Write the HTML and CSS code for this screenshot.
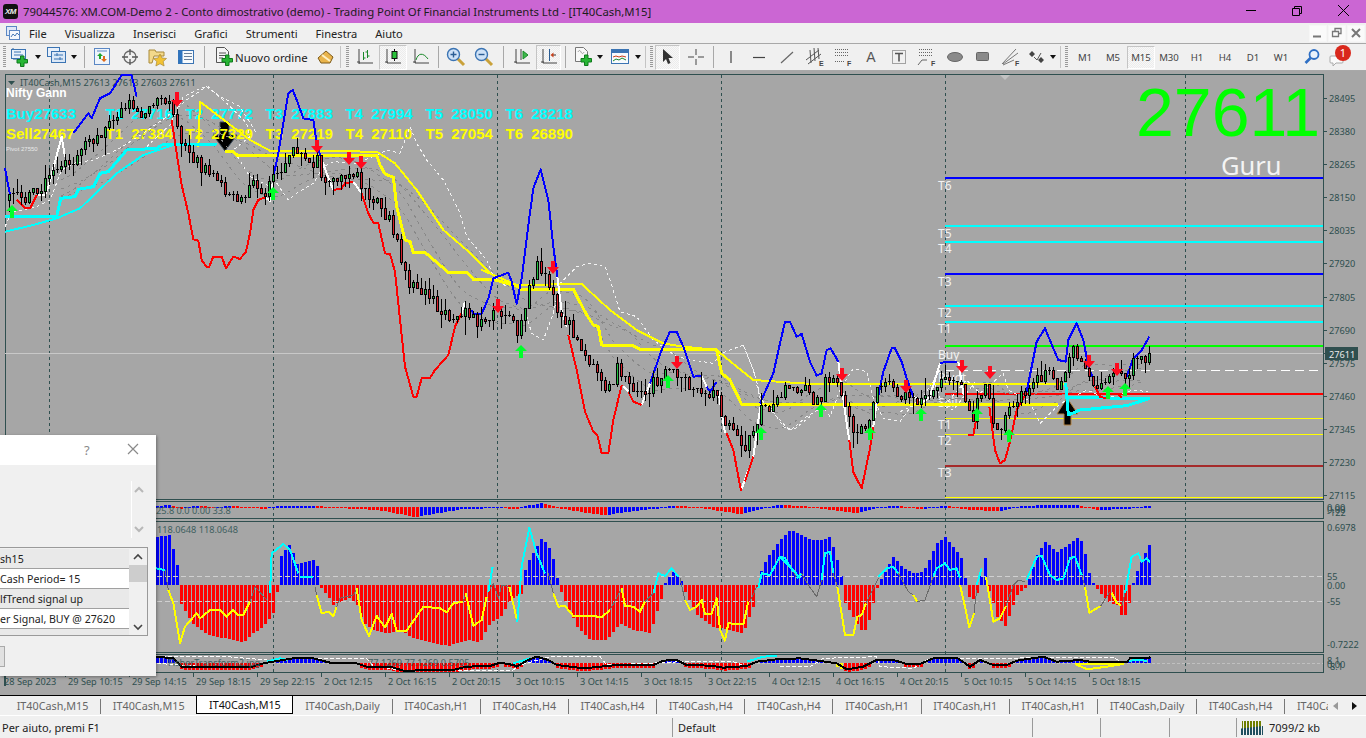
FILE: index.html
```html
<!DOCTYPE html>
<html lang="it">
<head>
<meta charset="utf-8">
<title>XM MetaTrader</title>
<link rel="stylesheet" href="styles.css">
</head>
<body>
<div class="app">
  <header class="titlebar">
    <span class="logo"><span class="logo-t">XM</span></span>
    <span class="title">79044576: XM.COM-Demo 2 - Conto dimostrativo (demo) - Trading Point Of Financial Instruments Ltd - [IT40Cash,M15]</span>
    <span class="winctl">
      <svg class="wc" width="46" height="23" viewBox="0 0 46 23"><path d="M18 10.5h10" stroke="#000" fill="none"/></svg>
      <svg class="wc" width="46" height="23" viewBox="0 0 46 23"><path d="M18.5 8.5h7v7h-7zM20.5 8.500v-2h7v7h-2" stroke="#000" fill="none"/></svg>
      <svg class="wc" width="46" height="23" viewBox="0 0 46 23"><path d="M18 5l11 11M29 5l-11 11" stroke="#000" fill="none"/></svg>
    </span>
  </header>

  <nav class="menubar">
    <svg class="mdi" width="16" height="16" viewBox="0 0 16 16"><rect x="1.5" y="1.5" width="10" height="9" fill="#dfe9f7" stroke="#5b87c4"/><rect x="4.5" y="5.5" width="10" height="9" fill="#f4f8fd" stroke="#5b87c4"/><path d="M6 12l2-3 2 2 2-3 2 2" stroke="#4a7ab8" fill="none"/></svg>
    <span class="mi">File</span>
    <span class="mi">Visualizza</span>
    <span class="mi">Inserisci</span>
    <span class="mi">Grafici</span>
    <span class="mi">Strumenti</span>
    <span class="mi">Finestra</span>
    <span class="mi">Aiuto</span>
    <span class="mdictl">
      <span class="mdib"><svg width="16" height="16" viewBox="0 0 16 16"><path d="M3 11.5h8" stroke="#777" stroke-width="2"/></svg></span>
      <span class="mdib"><svg width="16" height="16" viewBox="0 0 16 16"><path d="M3.5 6.5h6v5h-6zM6 6V3.5h6v5h-2" stroke="#777" stroke-width="1.3" fill="none"/></svg></span>
      <span class="mdib"><svg width="16" height="16" viewBox="0 0 16 16"><path d="M4 4l8 8M12 4l-8 8" stroke="#777" stroke-width="2"/></svg></span>
    </span>
  </nav>

  <div class="toolbar">
    <i class="grip grip-a"></i>
    <span class="btn w36"><svg width="20" height="20" viewBox="0 0 20 20"><path d="M2 1v11h13" fill="none" stroke="#2a5d94"/><rect x=".5" y="2.5" width="14" height="9" fill="#e8f0fa" stroke="#3b74b3"/><path d="M3 5h7M3 8h9" stroke="#3b74b3"/><path d="M9.5 9v3.500h-3.500v3.500h3.500v3.500h3.500v-3.500h3.500v-3.500h-3.500v-3.500z" fill="#27b534" stroke="#0f7a1c"/></svg><b class="caret"></b></span>
    <span class="btn w36"><svg width="20" height="20" viewBox="0 0 20 20"><rect x=".5" y=".5" width="12" height="9" fill="#e8f0fa" stroke="#3b74b3"/><rect x="4.500" y="4.500" width="14" height="11" fill="#dbe8f7" stroke="#3b74b3"/><path d="M7 8h9M7 12h9M10 6v3M13 10v3" stroke="#3b74b3"/></svg><b class="caret"></b></span>
    <i class="sep w8"></i>
    <span class="btn"><svg width="20" height="20" viewBox="0 0 20 20"><rect x="2.500" y="1.500" width="15" height="16" fill="#eef4fb" stroke="#5b87c4"/><path d="M5 4h10" stroke="#5b87c4"/><path d="M8 6l3 3H9v3H7V9H5z" fill="#1da32c"/><path d="M12 15l-3-3h2V9h2v3h2z" fill="#e06a1a"/></svg></span>
    <span class="btn"><svg width="20" height="20" viewBox="0 0 20 20"><circle cx="10" cy="10" r="6" fill="none" stroke="#6a6a6a" stroke-width="1.300"/><path d="M10 2v6M10 12v6M2 10h6M12 10h6" stroke="#555" stroke-width="1.300"/></svg></span>
    <span class="btn"><svg width="20" height="20" viewBox="0 0 20 20"><path d="M1 3h6l1 2h8v4H6l-2 7H1z" fill="#f3d98b" stroke="#a98a3a"/><path d="M12 7l2 4 4.500.500-3.300 3 .900 4.500-4.100-2.300-4.100 2.300.900-4.500-3.300-3 4.500-.500z" fill="#f2c233" stroke="#a98a3a" stroke-width=".7"/></svg></span>
    <span class="btn"><svg width="20" height="20" viewBox="0 0 20 20"><rect x="2.500" y="3.500" width="15" height="13" fill="#f7fafd" stroke="#3b74b3"/><rect x="2.500" y="3.500" width="4" height="13" fill="#2e74bf"/><path d="M8 6.500h8M8 9.500h8M8 12.500h8" stroke="#6a7f99"/></svg></span>
    <i class="sep w8"></i>
    <span class="btn w104"><svg width="20" height="20" viewBox="0 0 20 20"><path d="M2.500.5h8l4 4v11h-12z" fill="#f5f5f5" stroke="#555"/><path d="M5 6h7M5 8.500h7M5 11h4" stroke="#555"/><path d="M11.500 8v3.500H8v3.500h3.500v3.500H15V15h3.500v-3.500H15V8z" fill="#27b534" stroke="#0f7a1c"/></svg><span class="order">Nuovo ordine</span></span>
    <span class="btn"><svg width="20" height="20" viewBox="0 0 20 20"><path d="M2 11l8-7 7 6-3 6-9 0z" fill="#e9b44c" stroke="#7d5a1a"/><path d="M6 8l8 6" stroke="#fff0c2" stroke-width="2"/></svg></span>
    <i class="grip grip-m"></i>
    <span class="btn"><svg width="18" height="18" viewBox="0 0 18 18"><path d="M3 1v14h14" fill="none" stroke="#444"/><path d="M1 14h3M3 16v-1" stroke="#444"/><path d="M7.500 4v8M7.500 10h2M11.500 2v8M9.500 4h2M11.500 8h2" stroke="#1a8a2a" fill="none"/></svg></span>
    <span class="btn on"><svg width="18" height="18" viewBox="0 0 18 18"><path d="M3 1v14h14" fill="none" stroke="#444"/><path d="M1 14h3" stroke="#444"/><path d="M10.500 1v12" stroke="#111"/><rect x="8" y="3.500" width="5" height="7" fill="#2ac23a" stroke="#111"/></svg></span>
    <span class="btn"><svg width="18" height="18" viewBox="0 0 18 18"><path d="M3 1v14h14" fill="none" stroke="#444"/><path d="M1 14h3" stroke="#444"/><path d="M4 12c2-7 7-8 12-1" fill="none" stroke="#1a8a2a"/></svg></span>
    <i class="sep w7"></i>
    <span class="btn"><svg width="20" height="20" viewBox="0 0 20 20"><path d="M11 11l7 7" stroke="#c9a13a" stroke-width="3"/><circle cx="7.500" cy="7.500" r="6" fill="#cfe2f7" stroke="#3b74b3" stroke-width="1.400"/><path d="M4.500 7.500h6M7.500 4.500v6" stroke="#2a5d94" stroke-width="1.400"/></svg></span>
    <span class="btn"><svg width="20" height="20" viewBox="0 0 20 20"><path d="M11 11l7 7" stroke="#c9a13a" stroke-width="3"/><circle cx="7.500" cy="7.500" r="6" fill="#cfe2f7" stroke="#3b74b3" stroke-width="1.400"/><path d="M4.500 7.500h6" stroke="#2a5d94" stroke-width="1.400"/></svg></span>
    <i class="sep w10"></i>
    <span class="btn"><svg width="18" height="18" viewBox="0 0 18 18"><path d="M3 1v14h14" fill="none" stroke="#444"/><path d="M1 14h3M8 1v11" stroke="#444"/><path d="M10 3l5 4-5 4z" fill="#3db84a" stroke="#1a8a2a"/></svg></span>
    <span class="btn on w25"><svg width="18" height="18" viewBox="0 0 18 18"><path d="M3 1v14h14" fill="none" stroke="#444"/><path d="M1 14h3" stroke="#444"/><path d="M9.500 1v12" stroke="#2a5d94"/><path d="M16 7h-3" stroke="#333"/><path d="M10.500 7l3-2.500v5z" fill="#c8401a"/></svg></span>
    <i class="sep w9"></i>
    <span class="btn w38"><svg width="20" height="20" viewBox="0 0 20 20"><path d="M2.500.5h8l4 4v10h-12z" fill="#f8f8f8" stroke="#777"/><path d="M5 5c1-2 2-2 3 0s2 2 3 0" fill="none" stroke="#999"/><path d="M11.500 8v3.500H8v3.500h3.500v3.500H15V15h3.500v-3.500H15V8z" fill="#27b534" stroke="#0f7a1c"/></svg><b class="caret"></b></span>
    <span class="btn w37"><svg width="20" height="18" viewBox="0 0 20 18"><rect x=".5" y="1.500" width="17" height="14" fill="#f7fafd" stroke="#3b74b3"/><rect x="1" y="2" width="16" height="3" fill="#3b74b3"/><path d="M2 9l3-1 3 1 3-1 4 1" stroke="#c8401a" fill="none"/><path d="M2 13l3-2 3 1 3-2 4 2" stroke="#1a8a2a" fill="none"/></svg><b class="caret"></b></span>
    <i class="grip grip-n"></i>
    <span class="btn on w25"><svg width="16" height="18" viewBox="0 0 16 18"><path d="M3 1v13l3-3 2 5 2.500-1-2-5h4.500z" fill="#333"/></svg></span>
    <span class="btn b-gap"><svg width="18" height="18" viewBox="0 0 18 18"><path d="M9 1v6M9 11v6M1 9h6M11 9h6" stroke="#444"/></svg></span>
    <i class="sep w7"></i>
    <span class="btn"><svg width="16" height="16" viewBox="0 0 16 16"><path d="M8 2v12" stroke="#444" stroke-width="1.200"/></svg></span>
    <span class="btn"><svg width="16" height="16" viewBox="0 0 16 16"><path d="M2 8.500h12" stroke="#444" stroke-width="1.200"/></svg></span>
    <span class="btn"><svg width="16" height="16" viewBox="0 0 16 16"><path d="M2 14L14 3" stroke="#666" stroke-width="1.200"/></svg></span>
    <span class="btn"><svg width="20" height="20" viewBox="0 0 20 20"><path d="M1 13L14 3M3 17L16 7M5 3l1 13M9 1l1 13M13 1l1 11" stroke="#555" fill="none"/><text x="14" y="19" class="ic-t">E</text></svg></span>
    <span class="btn"><svg width="20" height="20" viewBox="0 0 20 20"><path d="M2 2.500h14M2 5.500h14M2 8.500h14M2 14.500h10" stroke="#666" stroke-dasharray="1 1" fill="none"/><text x="14" y="19" class="ic-t">F</text></svg></span>
    <span class="btn"><span class="glyph-a">A</span></span>
    <span class="btn"><svg width="18" height="18" viewBox="0 0 18 18"><rect x="2.500" y="2.500" width="13" height="13" fill="none" stroke="#555" stroke-dasharray="1 1"/><path d="M5 5.500h8M9 5.500v8" stroke="#555" stroke-width="1.600"/></svg></span>
    <span class="btn"><svg width="20" height="20" viewBox="0 0 20 20"><path d="M2 2.500h14M2 5.500h14M2 8.500h14" stroke="#666" stroke-dasharray="1 1" fill="none"/><path d="M1 18l4-5h5" stroke="#666" fill="none"/><text x="14" y="19" class="ic-t">F</text></svg></span>
    <span class="btn"><svg width="18" height="14" viewBox="0 0 18 14"><ellipse cx="9" cy="7" rx="7.500" ry="4.500" fill="#8a8a8a" stroke="#666"/></svg></span>
    <span class="btn"><svg width="16" height="14" viewBox="0 0 16 14"><rect x="1.500" y="2.500" width="12" height="8" rx="1" fill="#8a8a8a" stroke="#666"/></svg></span>
    <span class="btn"><svg width="20" height="20" viewBox="0 0 20 20"><path d="M1 17L15 2M2 17L17 6M2 18L13 13" stroke="#777" fill="none"/><text x="14" y="19" class="ic-t">F</text></svg></span>
    <span class="btn w35"><svg width="18" height="18" viewBox="0 0 18 18"><path d="M4 3l3 3-3 3-3-3zM13 9l3 3-3 3-3-3z" fill="#444"/><path d="M6 9l3 3 4-7" stroke="#555" fill="none"/></svg><b class="caret"></b></span>
    <i class="grip grip-t"></i>
    <span class="tf">M1</span><span class="tf">M5</span><span class="tf on">M15</span><span class="tf">M30</span><span class="tf">H1</span><span class="tf">H4</span><span class="tf">D1</span><span class="tf">W1</span>
    <span class="btn b-search"><svg width="18" height="18" viewBox="0 0 18 18"><circle cx="11" cy="6.500" r="4.500" fill="#eaf2fb" stroke="#2e6fc4" stroke-width="1.800"/><path d="M7.500 10L2.500 15" stroke="#2e6fc4" stroke-width="2.600"/></svg></span>
    <span class="btn msg">
      <svg width="16" height="14" viewBox="0 0 16 14" class="bubble"><path d="M2 2h11a1 1 0 0 1 1 1v5a1 1 0 0 1-1 1H7l-3 3V9H2a1 1 0 0 1-1-1V3a1 1 0 0 1 1-1z" fill="#fafafa" stroke="#aaa"/></svg>
      <span class="badge">1</span>
    </span>
  </div>

  <main class="chartwrap">
    <svg id="chart" class="chart" width="1366" height="624" viewBox="0 71 1366 624"></svg>
  </main>

  <div class="tabs">
    <div class="tablist">
      <span class="tab">IT40Cash,M15</span>
      <span class="tab">IT40Cash,M15</span>
      <span class="tab active">IT40Cash,M15</span>
      <span class="tab">IT40Cash,Daily</span>
      <span class="tab">IT40Cash,H1</span>
      <span class="tab">IT40Cash,H4</span>
      <span class="tab">IT40Cash,H4</span>
      <span class="tab">IT40Cash,H4</span>
      <span class="tab">IT40Cash,H4</span>
      <span class="tab">IT40Cash,H1</span>
      <span class="tab">IT40Cash,H1</span>
      <span class="tab">IT40Cash,H1</span>
      <span class="tab">IT40Cash,Daily</span>
      <span class="tab">IT40Cash,H4</span>
      <span class="tab">IT40Cash,H4</span>
    </div>
    <div class="tabnav"><i class="tri-l"></i><i class="tri-r"></i></div>
  </div>

  <footer class="statusbar">
    <span class="st st-help">Per aiuto, premi F1</span>
    <span class="st st-prof">Default</span>
    <span class="st st-a"></span>
    <span class="st st-b"></span>
    <span class="st st-c"></span>
    <span class="st st-conn">
      <svg width="24" height="14" viewBox="0 0 24 14"><path d="M1 0h20v7L1 8z" fill="#6e7f00"/><path d="M0 7.500L22 5v9H0z" fill="#1f4f5f"/><path d="M2.500 0v14M5.500 0v14M8.500 0v14M11.500 0v14M14.500 0v14M17.500 0v14M20.500 0v14" stroke="#f0f0f0"/></svg>
      <span>7099/2 kb</span>
    </span>
  </footer>

  <aside class="dialog">
    <div class="dlg-title"><span class="dlg-q">?</span><svg width="14" height="14" viewBox="0 0 14 14" class="dlg-x"><path d="M2 2l10 10M12 2L2 12" stroke="#8a8a8a" stroke-width="1.200"/></svg></div>
    <div class="dlg-body">
      <div class="dlg-pane">
        <svg width="10" height="8" viewBox="0 0 10 8"><path d="M1 6l4-4 4 4" fill="none" stroke="#b8b8b8" stroke-width="2"/></svg>
        <svg width="10" height="8" viewBox="0 0 10 8"><path d="M1 2l4 4 4-4" fill="none" stroke="#b8b8b8" stroke-width="2"/></svg>
      </div>
      <div class="listbox">
        <div class="rows">
          <div class="row alt">sh15</div>
          <div class="row">Cash Period= 15</div>
          <div class="row alt">lfTrend signal up</div>
          <div class="row">er Signal, BUY @ 27620</div>
          <div class="row alt"></div>
        </div>
        <div class="sb">
          <span class="sb-a"><svg width="10" height="8" viewBox="0 0 10 8"><path d="M1 6l4-4 4 4" fill="none" stroke="#444" stroke-width="1.600"/></svg></span>
          <span class="sb-th"></span>
          <span class="sb-a"><svg width="10" height="8" viewBox="0 0 10 8"><path d="M1 2l4 4 4-4" fill="none" stroke="#444" stroke-width="1.600"/></svg></span>
        </div>
      </div>
      <div class="dlg-btn"></div>
    </div>
  </aside>
</div>
<script src="app.js"></script>
</body>
</html>
```
FILE: styles.css
```css
* { box-sizing: border-box; }
html, body { margin: 0; padding: 0; width: 1366px; height: 738px; overflow: hidden; background: #f0f0f0; }
body { font-family: "Noto Sans", "Open Sans", sans-serif; font-size: 12px; color: #222; }
.app { position: relative; display: flex; flex-direction: column; width: 1366px; height: 738px; }

.titlebar { height: 23px; flex: none; display: flex; align-items: center; background: #cb66d3; }
.logo { width: 15px; height: 15px; margin: 0 5px 0 3px; flex: none; background: #111; border-radius: 3px; display: flex; align-items: center; justify-content: center; }
.logo-t { font: italic bold 8px "Liberation Sans", sans-serif; color: #eee; letter-spacing: -.5px; }
.title { font-size: 11.35px; color: #1c1c1c; white-space: nowrap; flex: 1; }
.winctl { display: flex; flex: none; width: 138px; }
.wc { display: block; }

.menubar { height: 20px; flex: none; display: flex; align-items: center; background: #f0f0f0; padding-left: 5px; }
.mdi { flex: none; margin-right: 8px; }
.mi { font-size: 11.1px; color: #222; margin-right: 18px; }
.mdictl { margin-left: auto; display: flex; gap: 1px; padding-right: 1px; }
.mdib { width: 18px; height: 17px; background: #fafafa; border: 1px solid #f6f6f6; display: flex; align-items: center; justify-content: center; }

.toolbar { height: 28px; flex: none; display: flex; align-items: center; background: #f0f0f0; border-top: 1px solid #a8a8a8; border-bottom: 1px solid #a8a8a8; padding-left: 3px; }
.grip { flex: none; height: 22px; background: repeating-linear-gradient(#9a9a9a 0 1px, transparent 1px 2px); background-size: 3px 100%; background-repeat: no-repeat; }
.grip-a { width: 5px; background-position: 0 0; }
.grip-m { width: 11px; background-position: 5px 0; border-left: 1px solid #c4c4c4; }
.grip-n { width: 10px; background-position: 4px 0; border-left: 1px solid #c4c4c4; }
.grip-t { width: 11px; background-position: 4px 0; border-left: 1px solid #c4c4c4; }
.btn { flex: none; width: 28px; height: 25px; display: flex; align-items: center; justify-content: center; }
.btn.on, .tf.on { background: repeating-conic-gradient(#f8f8f8 0 25%, #ececec 0 50%) 0 0 / 2px 2px; border: 1px solid #c4c4c4; border-right-color: #fff; border-bottom-color: #fff; }
.w25 { width: 25px; }
.w35 { width: 35px; }
.w36 { width: 36px; }
.w37 { width: 37px; }
.w38 { width: 38px; }
.w104 { width: 104px; }
.btn.w36, .btn.w37, .btn.w38, .btn.w35 { justify-content: flex-start; padding-left: 3px; }
.btn.w104 { justify-content: flex-start; padding-left: 6px; }
.b-gap { margin-left: 2px; }
.caret { flex: none; margin-left: 4px; width: 0; height: 0; border: 3px solid transparent; border-top: 4px solid #111; border-bottom: 0; }
.sep { flex: none; height: 22px; position: relative; }
.sep::after { content: ""; display: block; margin: 0 auto; width: 1px; height: 22px; background: #a8a8a8; }
.sep.w7 { width: 7px; }
.sep.w8 { width: 8px; }
.sep.w9 { width: 9px; }
.sep.w10 { width: 10px; }
.order { margin-left: 1px; font-size: 11.4px; color: #222; white-space: nowrap; }
.glyph-a { font: 14px "Liberation Sans", sans-serif; color: #555; }
.ic-t { font: bold 7px "Liberation Sans", sans-serif; fill: #444; }
.tf { flex: none; width: 28px; height: 23px; font-size: 9.6px; color: #444; display: flex; align-items: center; justify-content: center; }
.b-search { margin-left: 3px; }
.msg { position: relative; }
.bubble { margin: 8px 6px 0 0; }
.badge { position: absolute; left: 9px; top: 0; width: 16px; height: 16px; border-radius: 50%; background: #d9281c; color: #fff; font-size: 11px; line-height: 16px; text-align: center; }

.chartwrap { height: 624px; flex: none; background: #a6a6a6; }
.chart { display: block; }

.tabs { height: 20px; flex: none; display: flex; background: #f0f0f0; border-top: 1px solid #000; }
.tablist { flex: none; width: 1328px; display: flex; overflow: hidden; padding-left: 5px; }
.tab { flex: none; height: 15px; margin-top: 3px; padding: 0 11.7px; line-height: 14px; font-size: 10.8px; color: #666; white-space: nowrap; border-right: 1px solid #777; }
.tab.active { height: 18px; margin-top: 0; margin-left: -1px; padding: 2px 11.7px 0; color: #111; background: #fff; border: 1px solid #000; border-top: 0; }
.tabnav { flex: 1; display: flex; align-items: center; gap: 14px; padding-left: 5px; }
.tri-l { width: 0; height: 0; border: 4px solid transparent; border-right: 5px solid #999; border-left: 0; }
.tri-r { width: 0; height: 0; border: 4px solid transparent; border-left: 5px solid #111; border-right: 0; }

.statusbar { height: 23px; flex: none; display: flex; background: #f0f0f0; border-top: 1px solid #fff; padding-top: 2px; }
.st { height: 19px; line-height: 19px; font-size: 11px; color: #222; border-right: 1px solid #999; flex: none; white-space: nowrap; }
.st-help { width: 673px; padding-left: 2px; }
.st-prof { width: 360px; padding-left: 5px; }
.st-a { width: 68px; }
.st-b { width: 69px; }
.st-c { width: 67px; }
.st-conn { flex: 1; border-right: 0; display: flex; align-items: center; gap: 4px; padding-left: 4px; }

.dialog { position: absolute; left: 0; top: 435px; width: 156px; height: 241px; background: #f0f0f0; box-shadow: 1px 1px 3px rgba(0,0,0,.35); display: flex; flex-direction: column; }
.dlg-title { height: 30px; flex: none; background: #fff; position: relative; }
.dlg-q { position: absolute; left: 84px; top: 6px; font-size: 13px; color: #8a8a8a; }
.dlg-x { position: absolute; left: 126px; top: 7px; }
.dlg-body { flex: 1; display: flex; flex-direction: column; }
.dlg-pane { height: 57px; margin-top: 16px; width: 144px; position: relative; display: flex; flex-direction: column; justify-content: space-between; align-items: flex-end; padding: 5px 0 5px; }
.dlg-pane::before { content: ""; position: absolute; left: 131px; top: 0; width: 1px; height: 100%; background: #fff; }
.listbox { margin-top: 9px; width: 148px; height: 89px; flex: none; display: flex; background: #f0f0f0; border: 1px solid #9a9a9a; border-left: 0; }
.rows { width: 129px; flex: none; overflow: hidden; padding-top: 1px; }
.row { height: 20px; line-height: 20px; font-size: 10.6px; color: #222; background: #fff; border-bottom: 1px solid #a0a0a0; white-space: nowrap; }
.row.alt { background: #e9e9e9; }
.sb { flex: 1; display: flex; flex-direction: column; }
.sb-a { height: 17px; flex: none; display: flex; align-items: center; justify-content: center; }
.sb-th { height: 17px; flex: none; background: #cdcdcd; }
.sb-a:last-child { margin-top: auto; }
.dlg-btn { margin-top: 10px; width: 5px; height: 21px; border: 1px solid #aaa; border-left: 0; background: #e1e1e1; }

/* chart */
.frame { fill: none; stroke: #2f4f4f; }
.grid { stroke: #2f4f4f; stroke-dasharray: 3 3; }
.tick { stroke: #2f4f4f; }
.axis { font: 9.2px "Noto Sans", sans-serif; fill: #2f4f4f; }
.axis-s { font: 9.2px "Noto Sans", sans-serif; fill: #3f5f5f; }
.hdr { font: 9.2px "Noto Sans", sans-serif; fill: #2f4f4f; }
.curbox { fill: #2f4f4f; }
.curtxt { font: 9.2px "Noto Sans", sans-serif; fill: #e8e8e8; }
.bid { stroke: #c8c8c8; }
.big { font: 68px "Liberation Sans", sans-serif; fill: #00ff00; }
.guru { font: 25.5px "Noto Sans", sans-serif; fill: #f4f4f4; }
.nifty { font: bold 12px "Liberation Sans", sans-serif; fill: #fff; }
.lvl-c { font: bold 15px "Liberation Sans", sans-serif; fill: #00ffff; word-spacing: 4px; }
.lvl-y { font: bold 15px "Liberation Sans", sans-serif; fill: #ffff00; word-spacing: 4px; }
.pivot { font: 6px "Liberation Sans", sans-serif; fill: #e8e8e8; }
.lab { font: 12px "Noto Sans", sans-serif; fill: #f2f2f2; }
.pl { fill: none; shape-rendering: crispEdges; stroke-linejoin: round; }
.c-blue { stroke: #0000ff; stroke-width: 2; }
.c-red { stroke: #ff0000; stroke-width: 2; }
.c-white { stroke: #fff; stroke-width: 2; }
.c-yel1 { stroke: #ffff00; stroke-width: 2; }
.c-yel2 { stroke: #ffff00; stroke-width: 3; }
.c-cy1 { stroke: #00ffff; stroke-width: 3; }
.c-cy2 { stroke: #00ffff; stroke-width: 2; }
.c-cy4 { stroke: #00ffff; stroke-width: 3; }
.band { stroke: #f4f4f4; stroke-width: 1; stroke-dasharray: 3 3; }
.mid { stroke: #888; stroke-width: 1; stroke-dasharray: 3 4; }
.h-blue { stroke: #0000ff; stroke-width: 2; }
.h-cyan { stroke: #00ffff; stroke-width: 2; }
.h-green { stroke: #00ff00; stroke-width: 2; }
.h-white { stroke: #fff; stroke-width: 1; stroke-dasharray: 9 5; }
.h-red { stroke: #ff0000; stroke-width: 2; }
.h-yel { stroke: #ffff00; stroke-width: 1; }
.h-yel2 { stroke: #ffff00; stroke-width: 1; }
.h-brown { stroke: #a52a2a; stroke-width: 2; }
.wick { stroke: #000; shape-rendering: crispEdges; }
.up { fill: #20c040; stroke: #000; shape-rendering: crispEdges; }
.dn { fill: #d8202c; stroke: #000; shape-rendering: crispEdges; }
.ar-r { fill: #ff0a1e; }
.ar-g { fill: #00ff2a; }
.ar-k { fill: #000; stroke: #3a4a5a; stroke-width: 1; }
.ar-k2 { fill: #000; stroke: #b08040; stroke-width: 1; }
.b-blue { fill: #0000ff; shape-rendering: crispEdges; }
.b-red { fill: #ff0000; shape-rendering: crispEdges; }
.b-yel { fill: #ffff00; shape-rendering: crispEdges; }
.lvl55 { stroke: #d0d0d0; stroke-dasharray: 5 3; }
.gray { stroke: #6a6a6a; stroke-width: 1; }
.tl-c { stroke: #00ffff; stroke-width: 2; }
.tl-y { stroke: #ffff00; stroke-width: 2; }
.blk { stroke: #000; stroke-width: 2; }
.wd { stroke: #fff; stroke-width: 1; stroke-dasharray: 4 2; }
.sm { stroke: #c0c0c0; stroke-width: 1; stroke-dasharray: 3 2; }
.shift { fill: #c2c2c2; }
```
FILE: app.js
```js
(function () {
  var NS = 'http://www.w3.org/2000/svg';
  var svg = document.getElementById('chart');
  function el(tag, attrs, text) {
    var e = document.createElementNS(NS, tag);
    for (var k in attrs) e.setAttribute(k, attrs[k]);
    if (text !== undefined) e.textContent = text;
    svg.appendChild(e);
    return e;
  }
  function z(ox, oy, a) { var r = []; for (var i = 0; i < a.length; i += 2) r.push(ox + a[i] / 3, oy + a[i + 1] / 3); return r; }
  function poly(a, cls) { var s = []; for (var i = 0; i < a.length; i += 2) s.push(a[i] + ',' + a[i + 1]); el('polyline', { points: s.join(' '), 'class': cls }); }
  function pl(a, c) { poly(a, 'pl ' + c); }
  function hl(x1, x2, y, cls) { el('line', { x1: x1, x2: x2, y1: y, y2: y, 'class': cls, 'shape-rendering': 'crispEdges' }); }
  function txt(x, y, s, cls, anchor) { var o = { x: x, y: y, 'class': cls }; if (anchor) o['text-anchor'] = anchor; el('text', o, s); }
  function interp(a, x) {
    if (x <= a[0]) return a[1];
    for (var i = 2; i < a.length; i += 2) if (x <= a[i]) return a[i - 1] + (a[i + 1] - a[i - 1]) * (x - a[i - 2]) / (a[i] - a[i - 2]);
    return a[a.length - 1];
  }
  var seed = 12345;
  function rnd() { seed = (seed * 1664525 + 1013904223) >>> 0; return seed / 4294967296; }

  // price waypoints
  var P = [9,200,13,198,17,198,25,196,33,190,42,185,49,177,57,170,65,165,70,167,78,148,83,147,90,142,97,138,107,127,113,117,122,109,128,103,137,113,147,112,153,103,165,100,170,105,177,123,183,145,193,157,201,167,213,175,227,193,240,198,253,185,265,195,273,177,282,167,293,148,307,163,317,160,323,178,333,180,348,177,358,175,362,187,370,197,380,207,390,220,398,243,407,283,417,290,427,292,437,308,450,315,460,310,470,313,477,325,485,323,493,310,505,315,513,318,517,332,522,317,530,283,537,263,545,272,553,297,562,323,568,323,577,340,585,357,593,368,602,382,610,387,617,367,625,377,633,390,645,392,653,383,665,372,677,372,685,383,693,392,705,392,717,390,722,417,733,427,742,448,745,445,753,432,762,408,770,408,778,402,782,388,790,383,800,390,807,390,813,398,822,397,825,377,833,380,842,397,847,413,853,435,865,430,870,415,877,393,890,385,905,397,917,403,927,400,937,383,945,375,958,380,967,403,973,417,978,397,987,380,990,400,993,420,1000,428,1010,408,1020,398,1033,382,1047,372,1057,383,1067,367,1073,350,1077,357,1085,370,1090,378,1097,383,1107,378,1117,377,1127,378,1133,360,1145,357,1149,353];
  var candles = [], prev = interp(P, 5);
  for (var x = 9; x <= 1149; x += 4) {
    var c = Math.round(interp(P, x) + (rnd() - .5) * 12);
    var hi = Math.min(prev, c) - Math.round(rnd() * rnd() * 18), lo = Math.max(prev, c) + Math.round(rnd() * rnd() * 20);
    candles.push({ x: x, o: prev, c: c, h: hi, l: lo });
    prev = c;
  }

  // frames and grid
  [[5,74,1318,425],[5,501,1318,17],[5,521,1318,131],[5,654,1318,18]].forEach(function (r) {
    el('rect', { x: r[0] + .5, y: r[1] + .5, width: r[2], height: r[3], 'class': 'frame' });
  });
  el('polygon', { points: '1000,75 1010,75 1005,80', 'class': 'shift' });
  [49,273,497,721,945,1185].forEach(function (x) { el('line', { x1: x + .5, x2: x + .5, y1: 75, y2: 672, 'class': 'grid' }); });

  // Axis
  [[28495,98],[28380,131],[28265,164],[28150,197],[28035,230],[27920,263],[27805,297],[27690,330],[27575,363],[27460,396],[27345,429],[27230,462],[27115,495]].forEach(function (a) {
    el('line', { x1: 1323, x2: 1327, y1: a[1] + .5, y2: a[1] + .5, 'class': 'tick' });
    txt(1329, a[1] + 4, a[0], 'axis');
  });
  var tl = ['28 Sep 2023','29 Sep 10:15','29 Sep 14:15','29 Sep 18:15','29 Sep 22:15','2 Oct 12:15','2 Oct 16:15','2 Oct 20:15','3 Oct 10:15','3 Oct 14:15','3 Oct 18:15','3 Oct 22:15','4 Oct 12:15','4 Oct 16:15','4 Oct 20:15','5 Oct 10:15','5 Oct 14:15','5 Oct 18:15'];
  tl.forEach(function (s, i) {
    var xx = 4 + 64 * i;
    if (i) el('line', { x1: xx - 3 + .5, x2: xx - 3 + .5, y1: 672, y2: 677, 'class': 'tick' });
    txt(xx, 685, s, 'axis');
  });
  el('rect', { x: 4.5, y: 672.5, width: 1, height: 13, 'class': 'frame' });

  // Horizontal levels
  hl(5, 1323, 353.5, 'bid');
  hl(945, 1323, 178, 'h-blue');
  hl(945, 1323, 226, 'h-cyan');
  hl(945, 1323, 242, 'h-cyan');
  hl(945, 1323, 273.5, 'h-blue');
  hl(945, 1323, 306, 'h-cyan');
  hl(945, 1323, 322, 'h-cyan');
  hl(945, 1323, 346, 'h-green');
  hl(945, 1323, 370.5, 'h-white');
  hl(945, 1323, 394, 'h-red');
  hl(945, 1323, 418.5, 'h-yel');
  hl(945, 1323, 434.5, 'h-yel2');
  hl(945, 1323, 466, 'h-brown');
  hl(945, 1323, 497.5, 'h-yel');
  [['T6',190],['T5',238],['T4',253],['T3',286],['T2',317],['T1',333],['Buy',359],['Pivot',382],['Sell',407],['T1',429],['T2',445],['T3',477]].forEach(function (a) { txt(938, a[1], a[0], 'lab'); });

  // big black arrows (under text)
  el('polygon', { points: '220,122 229,122 229,135 237,135 225,151 213,135 220,135', 'class': 'ar-k' });
  el('polygon', { points: '1067,398 1078,414 1071,414 1071,425 1064,425 1064,414 1057,414', 'class': 'ar-k2' });

  // Level text
  txt(20, 85.500, 'IT40Cash,M15  27613 27613 27603 27611', 'hdr');
  el('polygon', { points: '8,81 15,81 11.5,85', fill: '#2f4f4f' });
  txt(6, 97, 'Nifty Gann', 'nifty');
  ['Buy27633','T1 27716','T2 27772','T3 27883','T4 27994','T5 28050','T6 28218'].forEach(function (s, i) { txt(i ? 25.5 + 80 * i : 6, 119, s, 'lvl-c'); });
  ['Sell27467','T1 27384','T2 27329','T3 27219','T4 27110','T5 27054','T6 26890'].forEach(function (s, i) { txt(i ? 25.5 + 80 * i : 6, 139, s, 'lvl-y'); });
  txt(6, 151, 'Pivot 27550', 'pivot');
  txt(1136, 136, '27611', 'big');
  txt(1221, 175, 'Guru', 'guru');

  // moving gray midlines from price
  function sma(x, w) { var s = 0, n = 0; for (var d = -w; d <= 0; d += 4) { s += interp(P, x + d); n++; } return s / n; }
  [[60,-8],[60,8],[100,-4],[140,2]].forEach(function (m) {
    var a = [];
    for (var x = 61; x <= 1145; x += 8) a.push(x, Math.round(sma(x, m[0]) + m[1]));
    pl(a, 'mid');
  });

  // White dashed bands
  pl(z(0,70,[15,470,35,425,70,420,110,410,130,400,150,390,185,300,220,280,280,270,350,240,430,190,500,140,560,90,620,50,660,80,720,110,745,150,770,190]), 'band');
  pl(z(150,80,[-10,200,60,135,100,50,150,25,175,20,230,70,290,130,300,170,250,210,300,290,360,320]), 'band');
  pl(z(150,80,[370,295,415,360,440,340,490,310,520,260,550,245,620,250,690,220,710,210,750,220,780,140,800,190,830,240,880,300,930,400,950,470,1010,540,1030,590,1070,620]), 'band');
  pl(z(450,160,[225,450,245,520,280,540,310,460,330,370,380,320,420,310,465,320,480,360,510,455,560,470,610,540,680,590,730,600,790,610,815,580,880,555,910,630,935,720,960,740,1000,800,1030,810,1080,770]), 'band');
  pl(z(710,310,[100,105,130,180,150,265,200,320,240,362,290,320,340,290,360,320,390,240,430,175,470,185,490,265,520,325,570,335,610,280,660,260,670,210,690,180]), 'band');
  pl(z(900,320,[0,275,60,250,100,180,130,260,200,180,240,220,310,160,325,210,385,240,420,310,470,260,500,240,560,210,620,235,700,210,745,215]), 'band');
  pl(z(900,320,[135,260,160,270,230,180]), 'band');

  // yellow, cyan
  pl(z(150,80,[145,200,150,65,300,180,360,212,680,215,735,250,800,330,880,450,950,510,1020,580]).concat(z(450,160,[95,330,200,375,395,372,480,450,560,510,640,550,700,560,800,570,860,620,910,660])).concat([812,384,1066,384]), 'c-yel1');
  pl(z(150,80,[225,215,250,215,262,226,680,226,690,255,705,282,730,292,740,380,765,480,780,485,790,517,825,517,895,577,950,577,970,597]).concat(z(450,160,[70,358,130,358,205,380,210,388,370,388,410,465,430,495,445,500,455,555,545,555,570,568,800,570,815,640,840,660,875,733])).concat([1058,404]), 'c-yel2');
  pl(z(0,70,[15,440,170,440,182,385,225,380,235,358,280,350,300,310,325,305,380,240,470,235,485,225,650,222]), 'c-cy4');
  pl(z(0,70,[15,485,100,465,170,445,240,415,350,310,430,255,520,225]), 'c-cy2');
  pl(z(900,320,[497,190,505,285,540,270,680,257,750,235]), 'c-cy1');
  pl(z(900,320,[505,233,750,235]), 'c-cy1');

  // Blue / red / white
  var BL = [
    z(0,70,[15,295,30,375]),
    z(0,70,[220,190,235,170,265,130,275,145,300,85,330,70,365,15,395,15,410,80]),
    z(150,80,[370,290,385,220,400,130,415,40,428,30,440,60,460,115,490,120,500,190,512,230]),
    z(450,160,[65,450,70,462,95,462,115,415,130,355,175,338,185,365,200,432,215,355,235,195,250,85,272,28,295,120,310,260,322,350]),
    z(450,160,[600,670,635,570,660,515,680,515,700,560,730,650,755,648]),
    z(450,160,[770,680,780,695,800,665]),
    z(710,310,[150,280,190,190,210,100,225,35,240,35,260,80,275,72,300,155,320,197,335,190,350,120,362,115,385,155]),
    z(710,310,[500,280,520,185,545,115,555,115,575,155,590,205,610,260]),
    z(710,310,[690,160,710,155,740,155]),
    z(900,320,[380,215,410,65,435,25,460,85,475,120,497,125,505,60,530,10,550,60,565,140,580,175]),
    z(900,320,[680,170,700,115,725,90,748,50])
  ];
  var RD = [
    z(0,70,[50,390,75,415,90,415,110,375]),
    z(150,80,[65,120,80,220,95,315,115,400,130,478,145,482,155,540,170,562,178,560,190,530,215,530,228,565,250,530,270,537,288,515,300,460,310,390,325,360,345,352]),
    z(150,80,[550,330,575,325,585,310,610,305]),
    z(150,80,[635,340,655,400,670,428,685,430,705,520,720,522,735,575,765,860,790,950,800,950,815,895,840,893,855,870,895,825,915,740,935,700]),
    z(450,160,[355,525,380,630,405,755,430,815,442,825,455,880,475,880,490,780,515,675]),
    z(450,160,[535,695,550,725,575,735]),
    z(450,160,[830,820,850,870,873,992]),
    z(450,160,[885,965,910,890]),
    z(710,310,[418,390,430,487,455,535,480,415,490,350]),
    z(900,320,[205,345,220,345,230,290]),
    z(900,320,[268,260,285,390,300,430,315,420,330,365,350,270,375,225]),
    z(900,320,[585,200,600,230,620,235]),
    z(900,320,[650,220,665,232])
  ];
  var WH = [
    z(0,70,[110,375,135,375,145,350,185,200,195,260]),
    z(150,80,[345,352,360,362,368,310]),
    z(150,80,[512,230,530,280,550,330]),
    z(150,80,[610,305,635,340]),
    z(150,80,[935,700,945,665]),
    z(450,160,[322,350,335,455,350,500]),
    z(450,160,[520,680,535,695]),
    z(450,160,[575,735,600,670]),
    z(450,160,[755,648,770,680]),
    z(450,160,[805,690,815,760,825,820]),
    z(450,160,[873,992,895,930]),
    z(450,160,[910,890,925,780,935,720]),
    z(710,310,[385,155,395,230,410,340,418,390]),
    z(710,310,[490,350,500,280]),
    z(710,310,[610,260,640,275,660,260,675,210,690,160]),
    z(710,310,[745,155,760,250,765,255])
  ];
  WH.forEach(function (a) { pl(a, 'c-white'); });
  BL.forEach(function (a) { pl(a, 'c-blue'); });
  RD.forEach(function (a) { pl(a, 'c-red'); });

  // Candles on foreground
  candles.forEach(function (k) {
    var t = Math.min(k.o, k.c), b = Math.max(k.o, k.c);
    if (b - t < 2) {
      el('line', { x1: k.x + .5, x2: k.x + .5, y1: k.h, y2: k.l + 1, 'class': 'wick' });
      el('line', { x1: k.x - 1, x2: k.x + 2, y1: t + .5, y2: t + .5, 'class': 'wick' });
    } else {
      el('line', { x1: k.x + .5, x2: k.x + .5, y1: k.h, y2: k.l, 'class': 'wick' });
      el('rect', { x: k.x - .5, y: t + .5, width: 2, height: b - t, 'class': k.c < k.o ? 'up' : 'dn' });
    }
  });

  // Arrows
  function down(x, t, b) { el('polygon', { points: [x-2,t, x+2,t, x+2,b-7, x+6,b-7, x,b, x-6,b-7, x-2,b-7].join(' '), 'class': 'ar-r' }); }
  function up(x, t, b) { el('polygon', { points: [x,t, x+6,t+6, x+2,t+6, x+2,b, x-2,b, x-2,t+6, x-6,t+6].join(' '), 'class': 'ar-g' }); }
  [[177,92,107],[317,140,153],[349,152,165],[361,156,169],[498,299,313],[553,261,274],[677,356,369],[842,368,381],[906,380,393],[962,360,373],[990,366,379],[1089,355,368],[1117,363,376]].forEach(function (a) { down(a[0], a[1], a[2]); });
  [[12,205,218],[273,187,200],[521,345,358],[668,375,388],[761,427,440],[821,404,417],[870,427,440],[921,408,421],[977,408,421],[1009,429,442],[1108,386,399],[1125,383,396]].forEach(function (a) { up(a[0], a[1], a[2]); });

  // current price
  el('rect', { x: 1325, y: 347, width: 33, height: 13, 'class': 'curbox' });
  el('line', { x1: 1323, x2: 1325, y1: 353.5, y2: 353.5, 'class': 'tick' });
  txt(1329, 357.500, '27611', 'curtxt');

  // Panel 1 histogram
  var H1 = [157,1,170,2,180,-1,195,1,215,0,230,1,250,0,265,-1,280,1,300,1,313,1,333,0,360,-1,383,-3,415,-9,433,-6,463,-1,500,0,517,-1,540,4,557,0,593,-6,607,-7,633,-3,673,1,700,0,740,-6,767,0,780,2,800,1,817,0,857,-5,877,0,897,1,923,-1,943,1,957,0,970,-2,1000,-3,1013,0,1043,2,1077,2,1097,-2,1123,-1,1150,1];
  var pv = 0;
  for (var x = 157; x <= 1149; x += 4) {
    var v = interp(H1, x), rising = v >= pv; pv = v;
    var h = Math.max(1, Math.round(Math.abs(v)) + 1);
    el('rect', { x: x - 1, y: v > 0 ? 508 - h : 507, width: 3, height: h, 'class': rising ? 'b-blue' : 'b-red' });
  }
  txt(156, 514, '25.8 0.0 0.00 33.8', 'axis-s');
  txt(1327, 511, '0.00', 'axis'); txt(1327, 513, '0.00', 'axis'); txt(1327, 516, '-122', 'axis');

  // Panel 2 histogram
  var H2 = [157,48,170,50,172,40,177,20,178,0,180,-17,192,-38,208,-50,233,-55,243,-58,253,-48,263,-42,273,-28,277,-7,279,0,280,28,290,41,297,21,300,22,313,25,318,18,319,0,320,-2,327,-10,333,-20,350,-13,357,-20,363,-38,373,-45,387,-48,400,-45,413,-53,433,-58,448,-61,467,-55,480,-57,490,-38,500,-33,510,-15,522,-8,524,0,525,15,530,27,542,48,550,35,555,20,558,0,563,-12,577,-42,590,-55,607,-55,620,-38,633,-45,650,-48,658,-23,663,-8,665,2,673,13,680,7,685,-7,697,-30,713,-42,730,-45,743,-48,753,-22,757,-2,760,12,767,27,780,45,790,55,810,45,822,45,830,48,837,25,842,5,844,0,845,-18,853,-32,862,-47,867,-43,873,-18,877,-3,882,8,893,28,903,17,913,12,923,13,937,42,945,48,957,33,962,25,965,7,967,0,970,-18,977,-8,980,0,982,17,985,27,987,0,993,-18,997,-32,1005,-41,1010,-28,1017,-10,1025,-3,1028,3,1037,30,1045,43,1057,33,1063,37,1077,47,1083,42,1088,15,1093,2,1098,-5,1108,-17,1117,-20,1122,-32,1127,-28,1130,-13,1133,2,1138,17,1145,32,1149,40];
  for (var x = 157; x <= 1149; x += 4) {
    var v = Math.round(interp(H2, x));
    if (v > 0) el('rect', { x: x - 1, y: 585 - v, width: 3, height: v, 'class': 'b-blue' });
    else if (v < 0) el('rect', { x: x - 1, y: 585, width: 3, height: -v, 'class': 'b-red' });
  }
  hl(157, 1323, 576.5, 'lvl55');
  hl(157, 1323, 601.5, 'lvl55');
  txt(157, 533, '118.0648 118.0648', 'axis-s');
  [[527,'0.6978'],[644,'-0.7222']].forEach(function (a) { txt(1327, a[0] + 4, a[1], 'axis'); });
  txt(1327, 580, '55', 'axis'); txt(1327, 589, '0.00', 'axis'); txt(1327, 605, '-55', 'axis');

  var segs = [
    ['tl-c',0,430,[468,415,495,420]], ['gray',0,430,[495,420,505,480]],
    ['tl-y',0,430,[505,480,520,520,540,640,555,590,590,550,600,565,630,540,660,540,680,560,700,540,715,555,730,555,750,515]],
    ['gray',0,430,[750,515,765,470,800,510]], ['tl-c',0,430,[810,490,815,370,850,342,870,360,895,430]],
    ['tl-c',300,490,[0,262,40,262]],
    ['gray',300,490,[45,290,50,315]], ['tl-y',300,490,[50,315,65,370,85,365,100,378,110,350]], ['gray',300,490,[110,350,120,325,160,315,170,295]],
    ['tl-y',300,490,[170,295,185,390,207,438,230,378,255,412,275,372,290,422,320,422,370,350,420,355,440,367,460,340,490,335]],
    ['gray',300,490,[490,335,497,310]], ['tl-y',300,490,[497,310,520,408,545,390,560,320]], ['gray',300,490,[565,305,580,280,595,325,605,285,625,290]],
    ['tl-c',300,490,[565,305,578,230]], ['tl-y',300,490,[628,290,652,395]], ['tl-c',300,490,[652,395,665,230,688,113,710,190,735,250]],
    ['gray',300,490,[745,250,760,310]], ['tl-y',300,490,[760,310,775,350,795,348,820,378,880,378,905,382,930,360]], ['gray',300,490,[930,360,965,295]],
    ['tl-y',300,490,[965,295,975,348,1000,350,1020,365,1035,335]], ['gray',300,490,[1035,335,1060,310]], ['tl-c',300,490,[1060,310,1075,250,1095,258,1115,235,1135,260]],
    ['gray',300,490,[1140,265,1155,330]], ['tl-y',300,490,[1155,330,1170,360,1190,350,1205,330,1215,372,1235,372,1250,325,1260,420,1275,452,1285,400,1330,403,1345,335]],
    ['gray',300,490,[1350,335,1370,290]], ['tl-c',300,490,[1375,295,1385,250,1410,255,1440,200,1480,240,1500,265]],
    ['tl-c',780,490,[0,200,15,205,40,245]], ['gray',780,490,[40,245,50,265]], ['tl-c',780,490,[50,265,65,250]], ['gray',780,490,[65,250,85,285,110,320,125,270]],
    ['tl-c',780,490,[125,270,135,190,150,185,160,250]], ['gray',780,490,[160,250,172,290]], ['tl-y',780,490,[172,290,195,435,220,435,232,380,245,375,258,340]],
    ['gray',780,490,[258,340,295,265]], ['tl-c',780,490,[295,260,320,235,340,230,355,250]], ['gray',780,490,[355,250,385,305,400,315]], ['tl-y',780,490,[400,315,412,335]],
    ['gray',780,490,[412,335,435,330,460,260]], ['tl-c',780,490,[460,260,470,235,495,220,510,240,530,235,540,265]], ['tl-y',780,490,[540,285,555,350,568,412,582,370]],
    ['gray',780,490,[582,370,590,300]], ['tl-c',780,490,[590,285,605,235]], ['tl-y',780,490,[618,260,640,395,660,385,678,348]], ['gray',780,490,[678,348,700,285,715,270,735,275]],
    ['tl-c',780,490,[740,270,770,200,785,198,810,255,830,270,850,265,870,205,885,200,905,255]], ['gray',780,490,[905,255,915,290]], ['tl-y',780,490,[915,290,928,368,945,358,962,348]],
    ['gray',780,490,[962,348,990,305]], ['tl-y',780,490,[995,308,1010,338,1025,348]], ['gray',780,490,[1025,348,1035,310]], ['tl-c',780,490,[1035,310,1055,200,1075,190,1085,215,1100,205,1110,218]]
  ];
  segs.forEach(function (s) { pl(z(s[1], s[2], s[3]), s[0]); });

  // Panel 3
  var B = [].concat(z(0,430,[468,680,520,685,545,710,750,712,790,700,820,695,880,685,900,685]), z(300,490,[0,503,40,505,90,518,170,520,200,530,270,530,310,542,460,540,500,530,570,528,600,518,640,525,650,530,680,512,710,500,745,510,770,525,850,535,950,525,1060,525,1090,512,1130,510,1160,525,1230,527,1270,533,1340,528,1370,515,1430,508]), z(780,490,[60,505,100,510,170,520,200,538,250,530,290,510,340,510,380,522,420,522,460,505,530,503,570,530,600,510,640,525,680,525,710,512,790,500,830,515,900,510,940,517,1040,517,1050,505,1110,503]));
  hl(157, 1323, 663, 'sm');
  for (var x = 157; x <= 1149; x += 4) {
    var y = Math.round(interp(B, x));
    if (y < 662) el('rect', { x: x - 1, y: y, width: 3, height: 663 - y, 'class': 'b-blue' });
    else if (y > 663) el('rect', { x: x - 1, y: 663, width: 3, height: Math.min(9, y - 663 + 3), 'class': (x > 1075 && x < 1115) || (x > 828 && x < 845) || (x > 160 && x < 180) ? 'b-yel' : 'b-red' });
  }
  pl(z(1000,640,[225,72,262,88,320,80,370,72,225,72]).concat([]), 'tl-y');
  pl(z(1000,640,[385,65,400,60,440,62]), 'tl-c');
  pl(z(300,490,[640,520,690,505]), 'tl-c');
  pl(z(300,490,[1340,515,1390,500,1430,498]), 'tl-c');
  pl(z(0,430,[800,695,840,685,860,690]), 'tl-c');
  pl(z(0,430,[468,680,680,680,800,690]), 'wd');
  pl(z(0,430,[470,700,640,712,750,712]), 'wd');
  pl(z(300,490,[0,505,200,505,220,528,320,543,460,540,640,540,660,525,750,500,900,500,920,525,1150,515,1300,515,1340,530]), 'wd');
  pl(z(780,490,[0,530,90,530,130,505,290,500,300,530,400,535,450,505,1000,503,1030,517]), 'wd');
  pl(B.concat([1149,657]), 'blk');
  txt(168, 666, 'FisherTransform2.ipg', 'axis-s');
  txt(368, 666, '77.1269 77.1269 0.5705', 'axis-s');
  txt(1327, 664, '8.1', 'axis'); txt(1327, 668, '0.00', 'axis'); txt(1330, 670, '8.1', 'axis');
})();
```
